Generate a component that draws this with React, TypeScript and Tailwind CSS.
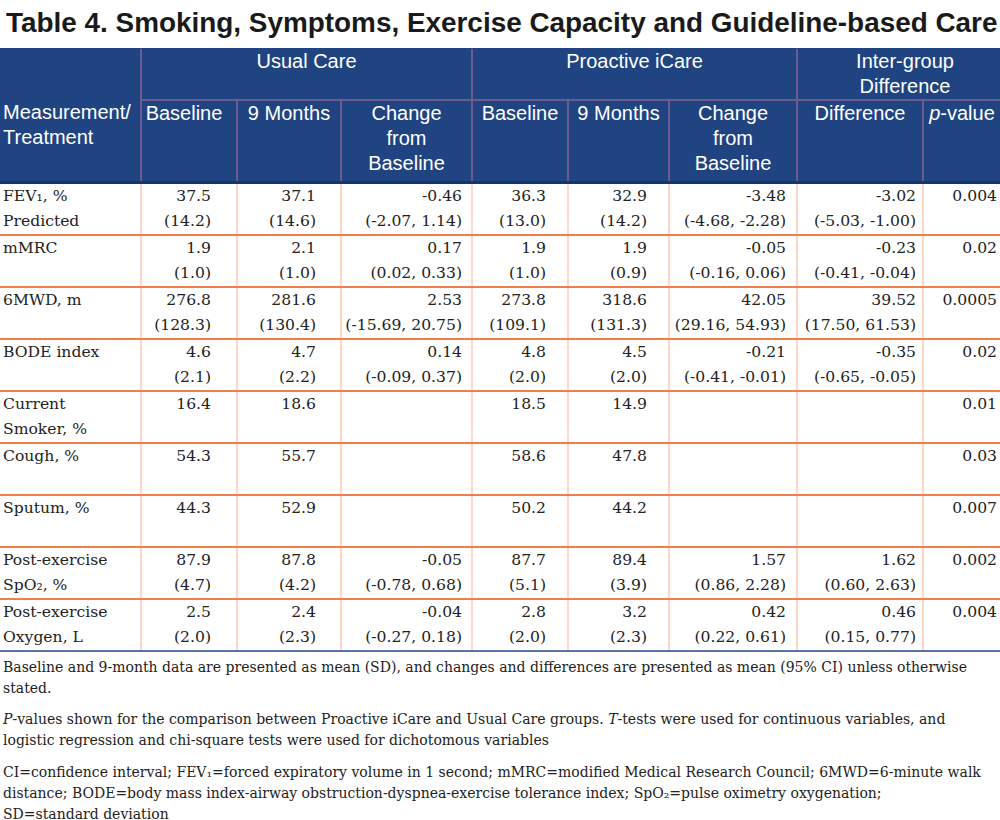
const cols = "grid grid-cols-[142px_96px_104px_131px_96px_101px_128px_126px_76px]";

type Row = { label: string[]; cells: string[][]; p: string };

const rows: Row[] = [
    {
        label: ["FEV₁, %", "Predicted"],
        cells: [["37.5", "(14.2)"], ["37.1", "(14.6)"], ["-0.46", "(-2.07, 1.14)"], ["36.3", "(13.0)"], ["32.9", "(14.2)"], ["-3.48", "(-4.68, -2.28)"], ["-3.02", "(-5.03, -1.00)"]],
        p: "0.004",
    },
    {
        label: ["mMRC"],
        cells: [["1.9", "(1.0)"], ["2.1", "(1.0)"], ["0.17", "(0.02, 0.33)"], ["1.9", "(1.0)"], ["1.9", "(0.9)"], ["-0.05", "(-0.16, 0.06)"], ["-0.23", "(-0.41, -0.04)"]],
        p: "0.02",
    },
    {
        label: ["6MWD, m"],
        cells: [["276.8", "(128.3)"], ["281.6", "(130.4)"], ["2.53", "(-15.69, 20.75)"], ["273.8", "(109.1)"], ["318.6", "(131.3)"], ["42.05", "(29.16, 54.93)"], ["39.52", "(17.50, 61.53)"]],
        p: "0.0005",
    },
    {
        label: ["BODE index"],
        cells: [["4.6", "(2.1)"], ["4.7", "(2.2)"], ["0.14", "(-0.09, 0.37)"], ["4.8", "(2.0)"], ["4.5", "(2.0)"], ["-0.21", "(-0.41, -0.01)"], ["-0.35", "(-0.65, -0.05)"]],
        p: "0.02",
    },
    { label: ["Current", "Smoker, %"], cells: [["16.4"], ["18.6"], [], ["18.5"], ["14.9"], [], []], p: "0.01" },
    { label: ["Cough, %"], cells: [["54.3"], ["55.7"], [], ["58.6"], ["47.8"], [], []], p: "0.03" },
    { label: ["Sputum, %"], cells: [["44.3"], ["52.9"], [], ["50.2"], ["44.2"], [], []], p: "0.007" },
    {
        label: ["Post-exercise", "SpO₂, %"],
        cells: [["87.9", "(4.7)"], ["87.8", "(4.2)"], ["-0.05", "(-0.78, 0.68)"], ["87.7", "(5.1)"], ["89.4", "(3.9)"], ["1.57", "(0.86, 2.28)"], ["1.62", "(0.60, 2.63)"]],
        p: "0.002",
    },
    {
        label: ["Post-exercise", "Oxygen, L"],
        cells: [["2.5", "(2.0)"], ["2.4", "(2.3)"], ["-0.04", "(-0.27, 0.18)"], ["2.8", "(2.0)"], ["3.2", "(2.3)"], ["0.42", "(0.22, 0.61)"], ["0.46", "(0.15, 0.77)"]],
        p: "0.004",
    },
];

// right padding per data column, read off the reference
const padR = ["pr-[25px]", "pr-[24px]", "pr-[9px]", "pr-[21px]", "pr-[21px]", "pr-[10px]", "pr-[6px]"];

const hLine = "border-[#6d5b8e]";

export default function App() {
    return (
        <div className="w-[1000px] h-[820px] bg-white overflow-hidden">
            {/* Title */}
            <div className="h-[48px] pl-[6px] pt-[5px] font-['Liberation_Sans',Arial,sans-serif] font-bold text-[27.9px] leading-[36px] text-[#1a1a1a] whitespace-nowrap">
                Table 4. Smoking, Symptoms, Exercise Capacity and Guideline-based Care
            </div>

            {/* Header */}
            <div className={`${cols} grid-rows-[52px_80px] bg-[#1f4481] pt-[1px] border-b-[3px] border-[#14356c] text-white font-['Liberation_Sans',Arial,sans-serif] text-[20px] leading-[25px]`}>
                <div className={`row-span-2 border-r-2 ${hLine} pl-[3px] pt-[51px] whitespace-nowrap`}>
                    Measurement/<br />Treatment
                </div>
                <div className={`col-span-3 border-r-2 border-b-2 ${hLine} text-center`}>Usual Care</div>
                <div className={`col-span-3 border-r-2 border-b-2 ${hLine} text-center`}>Proactive iCare</div>
                <div className={`col-span-2 border-b-2 ${hLine} text-center pl-[12px]`}>
                    Inter-group<br />Difference
                </div>
                <div className={`border-r-2 ${hLine} text-center pr-[10px]`}>Baseline</div>
                <div className={`border-r-2 ${hLine} text-center`}>9 Months</div>
                <div className={`border-r-2 ${hLine} text-center`}>Change<br />from<br />Baseline</div>
                <div className={`border-r-2 ${hLine} text-center`}>Baseline</div>
                <div className={`border-r-2 ${hLine} text-center`}>9 Months</div>
                <div className={`border-r-2 ${hLine} text-center`}>Change<br />from<br />Baseline</div>
                <div className={`border-r-2 ${hLine} text-center`}>Difference</div>
                <div className="text-center whitespace-nowrap"><i>p</i>-value</div>
            </div>

            {/* Body */}
            <div className="font-['DejaVu_Serif',serif] text-[15.6px] leading-[25px] text-[#222]">
                {rows.map((r, i) => (
                    <div
                        key={i}
                        className={`${cols} h-[52px] border-b-2 ${i === rows.length - 1 ? "border-[#5b73a6]" : "border-[#f07d4c]"}`}
                    >
                        <div className="border-r-2 border-[#fdd9c6] pl-[3px] whitespace-nowrap">
                            {r.label.map((l, j) => <div key={j}>{l}</div>)}
                        </div>
                        {r.cells.map((c, j) => (
                            <div key={j} className={`border-r-2 border-[#fdd9c6] text-right whitespace-nowrap ${padR[j]}`}>
                                {c.map((v, k) => <div key={k}>{v}</div>)}
                            </div>
                        ))}
                        <div className="text-right pr-[3px]">{r.p}</div>
                    </div>
                ))}
            </div>

            {/* Notes */}
            <div className="pl-[3px] pt-[5px] font-['DejaVu_Serif',serif] text-[14px] leading-[21px] text-[#222]">
                <p className="whitespace-nowrap">
                    Baseline and 9-month data are presented as mean (SD), and changes and differences are presented as mean (95% CI) unless otherwise
                    <br />stated.
                </p>
                <p className="mt-[10px] whitespace-nowrap">
                    <i>P</i>-values shown for the comparison between Proactive iCare and Usual Care groups. <i>T</i>-tests were used for continuous variables, and
                    <br />logistic regression and chi-square tests were used for dichotomous variables
                </p>
                <p className="mt-[11px] whitespace-nowrap">
                    CI=confidence interval; FEV₁=forced expiratory volume in 1 second; mMRC=modified Medical Research Council; 6MWD=6-minute walk
                    <br />distance; BODE=body mass index-airway obstruction-dyspnea-exercise tolerance index; SpO₂=pulse oximetry oxygenation;
                    <br />SD=standard deviation
                </p>
            </div>
        </div>
    );
}
